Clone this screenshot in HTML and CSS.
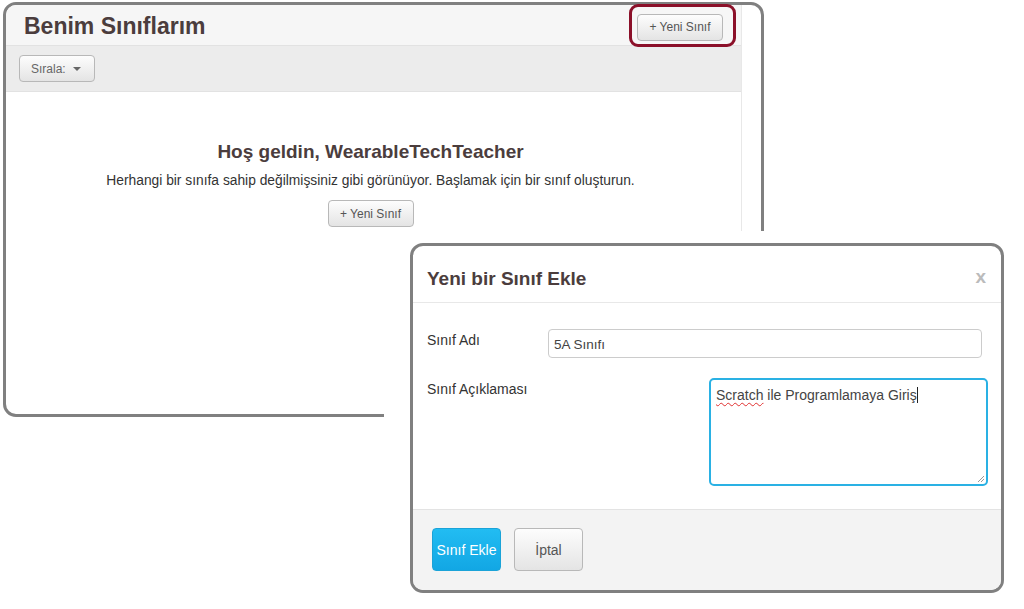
FILE: index.html
```html
<!DOCTYPE html>
<html lang="tr">
<head>
<meta charset="UTF-8" />
<title>Benim Sınıflarım</title>
<link rel="stylesheet" href="styles.css">
</head>
<body>

<div class="window classes">
  <div class="main">
    <div class="page-header">
      <h1>Benim Sınıflarım</h1>
      <button class="btn btn-small">+ Yeni Sınıf</button>
    </div>
    <div class="toolbar">
      <button class="btn btn-sort">Sırala: <span class="caret"></span></button>
    </div>
    <div class="empty">
      <h2>Hoş geldin, WearableTechTeacher</h2>
      <p>Herhangi bir sınıfa sahip değilmişsiniz gibi görünüyor. Başlamak için bir sınıf oluşturun.</p>
      <button class="btn btn-small">+ Yeni Sınıf</button>
    </div>
  </div>
  <div class="gutter"></div>
</div>

<div class="highlight"></div>
<div class="cutout"></div>

<div class="window modal">
  <div class="modal-header">
    <h3>Yeni bir Sınıf Ekle</h3>
    <span class="close">x</span>
  </div>
  <div class="modal-body">
    <label>Sınıf Adı</label>
    <div class="input">5A Sınıfı</div>
    <label class="top">Sınıf Açıklaması</label>
    <div class="textarea">
      <span class="typo">Scratch</span> ile Programlamaya Giriş<span class="cursor"></span>
      <svg class="grip" width="9" height="9" viewBox="0 0 9 9">
        <path d="M8 2 L2 8 M8 5 L5 8" stroke="#999" stroke-width="1" fill="none"/>
      </svg>
    </div>
  </div>
  <div class="modal-footer">
    <button class="btn btn-primary">Sınıf Ekle</button>
    <button class="btn btn-cancel">İptal</button>
  </div>
</div>

</body>
</html>
```

FILE: styles.css
```css
html, body {
  margin: 0;
  padding: 0;
  background: #fff;
  font-family: 'Liberation Sans', Arial, sans-serif;
  color: #333;
}
body {
  width: 1024px;
  height: 609px;
  position: relative;
  overflow: hidden;
}
.window {
  position: absolute;
  border: 3px solid #808080;
  border-radius: 13px;
  background: #fff;
  overflow: hidden;
}

/* back window */
.classes {
  left: 3px;
  top: 2px;
  width: 755px;
  height: 409px;
  display: flex;
}
.main {
  width: 735px;
  border-right: 1px solid #e8e8e8;
}
.gutter {
  flex: 1;
}
.page-header {
  height: 40px;
  background: #f6f6f6;
  border-bottom: 1px solid #e2e2e2;
  display: flex;
  align-items: center;
  justify-content: space-between;
  padding: 0 18px 0 18px;
}
.page-header h1 {
  margin: 0;
  font-size: 23px;
  font-weight: 700;
  color: #4b3d3d;
  position: relative;
  top: 1px;
}
.page-header .btn {
  margin-top: 4px;
}
.toolbar {
  height: 46px;
  background: #ececec;
  border-bottom: 1px solid #e2e2e2;
  padding: 9px 13px 0;
  box-sizing: border-box;
}
.empty {
  text-align: center;
  padding: 48px 6px 0 0;
}
.empty h2 {
  margin: 0;
  font-size: 19px;
  line-height: 23px;
  color: #4b3d3d;
}
.empty p {
  margin: 8px 0 9px;
  font-size: 13.8px;
  line-height: 20px;
  color: #333;
}

.btn {
  font-family: 'Liberation Sans', Arial, sans-serif;
  border: 1px solid #b8b8b8;
  border-radius: 4px;
  background: linear-gradient(#fdfdfd, #e4e4e4);
  color: #555;
  cursor: pointer;
  padding: 0;
}
.btn-small {
  width: 86px;
  height: 27px;
  font-size: 12px;
}
.btn-sort {
  width: 76px;
  height: 27px;
  font-size: 12px;
  text-align: left;
  padding-left: 11px;
  color: #666;
}
.caret {
  display: inline-block;
  width: 0;
  height: 0;
  border-left: 4px solid transparent;
  border-right: 4px solid transparent;
  border-top: 4px solid #666;
  vertical-align: middle;
  margin-left: 4px;
}

.highlight {
  position: absolute;
  left: 629px;
  top: 4px;
  width: 101px;
  height: 37px;
  border: 3px solid #8b1029;
  border-radius: 9px;
}
.cutout {
  position: absolute;
  left: 384px;
  top: 231px;
  width: 400px;
  height: 200px;
  background: #fff;
}

/* dialog */
.modal {
  left: 410px;
  top: 243px;
  width: 588px;
  height: 344px;
  display: flex;
  flex-direction: column;
}
.modal-header {
  height: 56px;
  border-bottom: 1px solid #e8e8e8;
  display: flex;
  align-items: center;
  justify-content: space-between;
  padding: 0 16px 0 14px;
  flex-shrink: 0;
}
.modal-header h3 {
  margin: 0;
  font-size: 19px;
  font-weight: 700;
  color: #4b3d3d;
  position: relative;
  top: 5px;
}
.close {
  font-size: 19px;
  font-weight: 700;
  color: #bbb;
  position: relative;
  top: 3px;
  right: -1px;
}
.modal-body {
  height: 207px;
  box-sizing: border-box;
  border-bottom: 1px solid #e3e3e3;
  padding: 26px 0 0 14px;
  display: grid;
  grid-template-columns: 121px 1fr;
  grid-template-rows: 29px 108px;
  row-gap: 20px;
  font-size: 14px;
}
.modal-body label {
  color: #333;
  line-height: 20px;
  padding-top: 1px;
}
.input {
  width: 434px;
  height: 29px;
  box-sizing: border-box;
  border: 1px solid #ccc;
  border-radius: 4px;
  padding: 7px 5px 0;
  color: #444;
  font-size: 13.5px;
}
.textarea {
  position: relative;
  margin-left: 161px;
  width: 279px;
  height: 108px;
  box-sizing: border-box;
  border: 2px solid #2ab1e4;
  border-radius: 5px;
  padding: 6px 5px;
  font-size: 14px;
  line-height: 18px;
  color: #444;
}
.typo {
  text-decoration: underline wavy #e03030;
  text-decoration-thickness: 1px;
  text-underline-offset: 2px;
}
.cursor {
  display: inline-block;
  width: 1px;
  height: 16px;
  background: #222;
  vertical-align: -3px;
}
.grip {
  position: absolute;
  right: 1px;
  bottom: 1px;
}
.modal-footer {
  flex: 1;
  background: #f3f3f3;
  display: flex;
  align-items: flex-start;
  gap: 13px;
  padding: 18px 0 0 19px;
}
.btn-primary {
  width: 69px;
  height: 43px;
  font-size: 14px;
  color: #fff;
  border: 1px solid #1aa3d8;
  background: linear-gradient(#22bcf2, #12a7e4);
}
.btn-cancel {
  width: 69px;
  height: 43px;
  font-size: 14px;
  color: #555;
}
```
